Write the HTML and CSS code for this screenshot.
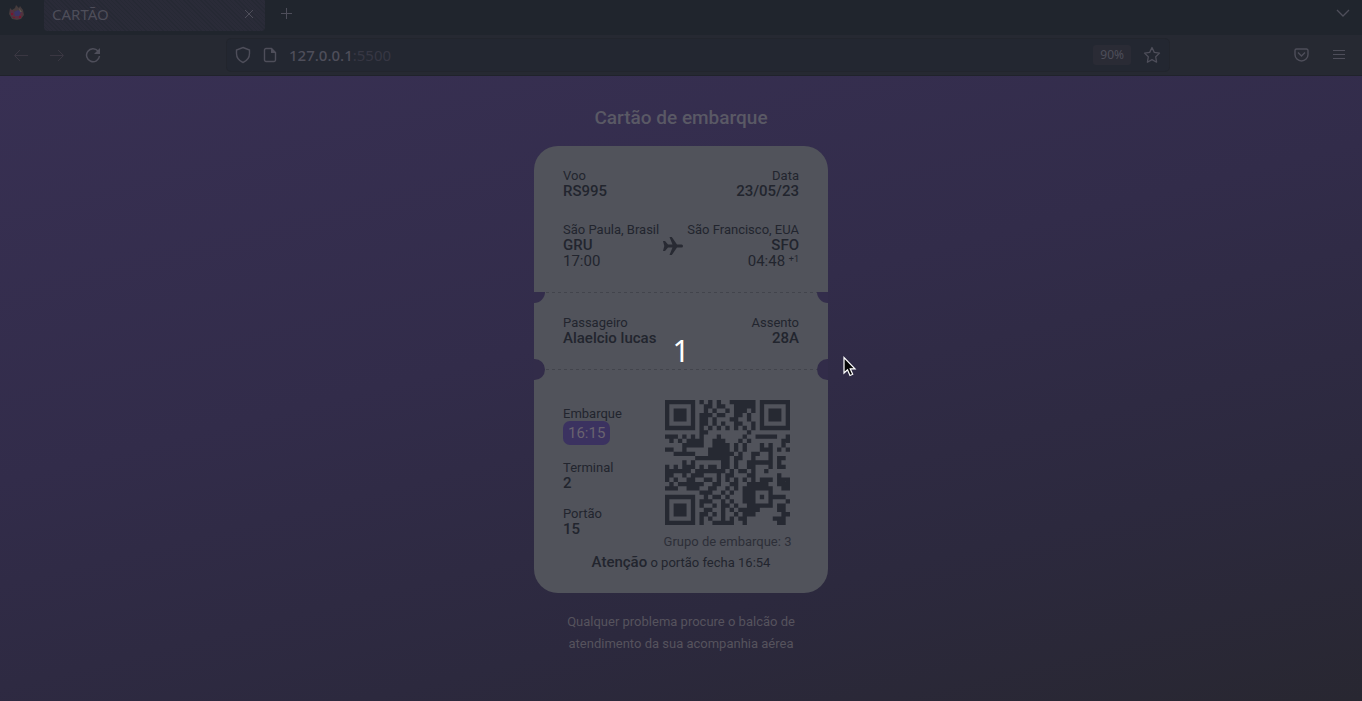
FILE: index.html
```html
<!DOCTYPE html>
<html lang="pt-BR">
<head>
<meta charset="utf-8">
<title>CARTÃO</title>
<link rel="stylesheet" href="styles.css">
</head>
<body>
<header class="browser">
  <div class="tabs">
    <svg class="logo" width="18" height="18" viewBox="0 0 18 18" aria-hidden="true"><path d="M2 4l2 2 3-2 1-3 3 3 1-2 3 4 1 5-3 4-4 1-5-1-3-5z" fill="#453b3c"/><path d="M2 6l3 0 3 3 6-1 1 2-3 5-5 0-4-3z" fill="#553040"/><path d="M6 8l4-2 3 2-2 4-4 0z" fill="#3b3465"/><path d="M3 9h2v2H3zM5 13h2v1H5zM11 12h2v2h-2z" fill="#77152f"/><path d="M11 4l3 4-2 0z" fill="#5f5650"/></svg>
    <div class="tab">
      <span>CARTÃO</span>
      <button class="icon" aria-label="Fechar aba"><svg width="10" height="10" viewBox="0 0 10 10"><path d="M1 1l8 8M9 1L1 9"/></svg></button>
    </div>
    <button class="icon new-tab" aria-label="Nova aba"><svg width="13" height="13" viewBox="0 0 13 13"><path d="M6.500 1v11M1 6.500h11"/></svg></button>
    <button class="icon list-tabs" aria-label="Listar abas"><svg width="14" height="14" viewBox="0 0 14 14"><path d="M1 3l6 6 6-6" stroke-width="1.300"/></svg></button>
  </div>
  <div class="toolbar">
    <nav class="nav">
      <button class="icon dim" aria-label="Voltar"><svg width="16" height="16" viewBox="0 0 16 16"><path d="M15 8.500H2M7 3L1.500 8.500 7 14"/></svg></button>
      <button class="icon dim" aria-label="Avançar"><svg width="16" height="16" viewBox="0 0 16 16"><path d="M1 8.500h13M9 3l5.500 5.500L9 14"/></svg></button>
      <button class="icon" aria-label="Recarregar"><svg width="16" height="16" viewBox="0 0 16 16"><path d="M13 4a6.500 6.500 0 1 0 1.500 5" stroke-width="1.500"/><path d="M15 1v6H9z" fill="currentColor" stroke="none"/></svg></button>
    </nav>
    <div class="address">
      <svg width="16" height="18" viewBox="0 0 16 18"><path d="M8 1.500L14.500 4v3.500c0 4-3 7.500-6.500 9-3.500-1.500-6.500-5-6.500-9V4z" stroke-width="1.400"/></svg>
      <svg width="14" height="16" viewBox="0 0 14 16"><path d="M3 1.500h5.500L12.500 5.500V13a1.500 1.500 0 0 1-1.500 1.500H3A1.500 1.500 0 0 1 1.500 13V3A1.500 1.500 0 0 1 3 1.500z" stroke-width="1.400"/><path d="M8 1v5h5z" fill="currentColor" stroke="none"/></svg>
      <span class="url"><b>127.0.0.1</b>:5500</span>
      <button class="zoom">90%</button>
      <button class="icon" aria-label="Favoritar"><svg width="18" height="18" viewBox="0 0 18 18"><path d="M9 1.500l2.300 4.900 5.200.7-3.800 3.700.9 5.400L9 13.600l-4.600 2.600.9-5.400L1.500 7.100l5.200-.7z" stroke-width="1.300" stroke-linejoin="round"/></svg></button>
    </div>
    <div class="tools">
      <button class="icon" aria-label="Pocket"><svg width="16" height="16" viewBox="0 0 16 16"><path d="M2.500 2h10A1.500 1.500 0 0 1 14 3.500V7.500A6.500 6.500 0 0 1 1 7.500V3.500A1.500 1.500 0 0 1 2.500 2zM4 5.500L7.500 9 11 5.500" stroke-width="1.400"/></svg></button>
      <button class="icon" aria-label="Menu"><svg width="14" height="14" viewBox="0 0 14 14"><path d="M1 2.500h12M1 6.500h12M1 10.500h12" stroke-width="1.200"/></svg></button>
    </div>
  </div>
</header>
<main class="page">
  <h1>Cartão de embarque</h1>
  <article class="card">
    <section class="flight">
      <div class="row">
        <dl><dt>Voo</dt><dd>RS995</dd></dl>
        <dl class="end"><dt>Data</dt><dd>23/05/23</dd></dl>
      </div>
      <div class="row">
        <dl><dt>São Paula, Brasil</dt><dd>GRU</dd><dd class="time">17:00</dd></dl>
        <svg class="plane" width="22" height="20" viewBox="0 0 22 20" aria-hidden="true"><path d="M1 5h2l3 3.500h4.500L7.500 1h2.300l5.200 7.500h4.500a1.500 1.500 0 0 1 0 3H15L9.800 19H7.500l3-7.500H6L3 15H1l1.300-5z" fill="#282a33"/></svg>
        <dl class="end"><dt>São Francisco, EUA</dt><dd>SFO</dd><dd class="time">04:48 <sup>+1</sup></dd></dl>
      </div>
    </section>
    <section class="passenger">
      <div class="row">
        <dl><dt>Passageiro</dt><dd>Alaelcio lucas</dd></dl>
        <dl class="end"><dt>Assento</dt><dd>28A</dd></dl>
      </div>
    </section>
    <section class="boarding">
      <div class="row">
        <div class="gate">
          <dl><dt>Embarque</dt><dd class="badge">16:15</dd></dl>
          <dl><dt>Terminal</dt><dd>2</dd></dl>
          <dl><dt>Portão</dt><dd>15</dd></dl>
        </div>
        <figure class="code">
          <svg id="qr" width="125" height="125" viewBox="0 0 29 29" role="img" aria-label="QR code"></svg>
          <figcaption>Grupo de embarque: 3</figcaption>
        </figure>
      </div>
      <p class="notice"><strong>Atenção</strong> o portão fecha 16:54</p>
    </section>
  </article>
  <p class="help">Qualquer problema procure o balcão de<br>atendimento da sua acompanhia aérea</p>
</main>
<div class="countdown">1</div>
<svg class="cursor" width="14" height="22" viewBox="0 0 14 22" aria-hidden="true"><path d="M1 1.500V17l3.500-3.300L7 19.500l2.700-1.200L7.200 12.800H12z" fill="#050505" stroke="#fff" stroke-width="1.200"/></svg>
<script src="qr.js"></script>
</body>
</html>
```
FILE: styles.css
```css
* { box-sizing: border-box; }
body {
  margin: 0;
  min-height: 100vh;
  display: flex;
  flex-direction: column;
  background: #272831;
  color: #22252e;
  font-family: Roboto, "Liberation Sans", sans-serif;
}
h1, p, dl, dd, figure { margin: 0; }
button { font: inherit; color: inherit; border: 0; padding: 0; background: none; }
.browser { font-family: "Noto Sans", "Open Sans", sans-serif; color: #4e4e5a; }
.browser svg { display: block; fill: none; stroke: currentColor; }
.browser .logo { stroke: none; margin: 4px 0 0 8px; }
.tabs { display: flex; height: 35px; background: #20252d; }
.tab {
  display: flex;
  align-items: center;
  justify-content: space-between;
  width: 221px;
  height: 31px;
  margin-left: 18px;
  padding: 0 11px 4px 8px;
  border-radius: 0 0 4px 4px;
  background: repeating-linear-gradient(45deg, #262934 0 1px, #2a2b38 1px 3px);
  font-size: 15px;
}
.new-tab { margin: 0 0 8px 15px; }
.list-tabs { margin: 0 12px 8px auto; }
.toolbar {
  display: flex;
  align-items: center;
  height: 41px;
  background: #262932;
  border-bottom: 1px solid #20232b;
}
.nav { display: flex; gap: 20px; width: 227px; padding-left: 13px; }
.dim { color: #3a3742; }
.address {
  flex: 1;
  display: flex;
  align-items: center;
  height: 32px;
  padding: 0 8px;
  border-radius: 4px;
  background: #232731;
  box-shadow: 0 0 0 1px #22252d;
  gap: 12px;
}
.url { flex: 1; font-size: 15px; color: #373744; }
.url b { font-weight: 500; color: #4e4e5a; }
.zoom { padding: 0 7px; border-radius: 3px; background: #2a2b35; font-size: 12px; line-height: 20px; }
.tools { display: flex; align-items: center; justify-content: flex-end; gap: 22px; width: 193px; padding-right: 16px; }

.page {
  flex: 1;
  display: flex;
  flex-direction: column;
  align-items: center;
  padding: 30px 16px 16px;
  background: linear-gradient(166deg, #383053 0%, #322c4a 42%, #2c293e 74%, #282731 100%);
}
h1 { font-size: 19px; line-height: 24px; font-weight: 500; color: #5a5965; }
.card {
  width: 294px;
  margin-top: 16px;
  border-radius: 24px;
  background: #51535b;
}
.flight { display: grid; gap: 23px; padding: 22px 29px 23px; }
.row { display: flex; justify-content: space-between; }
dt { font-size: 13px; line-height: 15px; }
dd { font-size: 15px; line-height: 16px; font-weight: 500; }
.time { font-weight: 400; }
sup { font-size: 9px; line-height: 1; vertical-align: 4px; }
.end { text-align: right; }
.plane { margin-top: 14px; }
.passenger, .boarding {
  position: relative;
  background: repeating-linear-gradient(90deg, #42444c 0 3px, transparent 3px 6px) 0 0 / 100% 1px no-repeat;
}
.passenger { padding: 23px 29px 23px; }
.boarding { padding: 31px 29px 22px; }
.passenger::before, .passenger::after, .boarding::before, .boarding::after {
  content: "";
  position: absolute;
  width: 11px;
  background: #332d4b;
}
.passenger::before, .passenger::after { top: 0; height: 11px; }
.boarding::before, .boarding::after { top: -10px; height: 21px; background: #322c49; }
.passenger::before { left: 0; border-radius: 0 0 11px 0; }
.passenger::after { right: 0; border-radius: 0 0 0 11px; }
.boarding::before { left: 0; border-radius: 0 11px 11px 0; }
.boarding::after { right: 0; border-radius: 11px 0 0 11px; }
.gate { display: grid; align-content: start; justify-items: start; gap: 15px; padding-top: 6px; }
.badge {
  width: fit-content;
  padding: 0 5px;
  border-radius: 7px;
  background: #3b3260;
  color: #69636f;
  line-height: 24px;
  font-weight: 400;
}
.code { width: 125px; margin-right: 9px; text-align: center; }
.code svg { display: block; fill: #262932; }
figcaption { margin: 9px -8px 0; font-size: 13px; line-height: 15px; color: #2d2f38; }
.notice { margin-top: 5px; font-size: 13px; line-height: 16px; text-align: center; }
.notice strong { font-size: 15px; font-weight: 500; }
.help { margin-top: 18px; font-size: 13px; line-height: 22px; text-align: center; color: #56535d; }

.countdown {
  position: absolute;
  inset: 0;
  display: grid;
  place-items: center;
  color: #fff;
  font: 30px/36px "Noto Sans", sans-serif;
  pointer-events: none;
}
.cursor { position: absolute; left: 843px; top: 356px; }
```
FILE: qr.js
```js
const rows = [
  "11111110101010011111101111111",
  "10000010011011001111101000001",
  "10111010010100101110101011101",
  "10111010111011001101001011101",
  "10111010110100011001001011101",
  "10000010110101001100101000001",
  "11111110101010101010101111111",
  "00000000110000000001000000000",
  "11101010100010000010011111001",
  "01010111100111000101000000011",
  "00001111100111101010001010010",
  "11001000001111101010001110101",
  "00111110001111110100110010000",
  "00000001111111101100100010110",
  "00001010000001101001111110100",
  "10101110101101101001100010110",
  "11111101111111010110100100000",
  "11001011100010110001100000100",
  "10100110011010101010101110111",
  "01011111100110011001111100111",
  "11100111001100101011111110011",
  "00000000111001010011100010000",
  "11111110010110100011101011110",
  "10000010111001010011100010001",
  "10111010100101101001111110110",
  "10111010011001010111110000110",
  "10111010110101001011100000011",
  "10000010101001010110000001110",
  "11111110100111110010000000110"
];
const path = document.createElementNS("http://www.w3.org/2000/svg", "path");
path.setAttribute("d", rows.map((row, y) =>
  [...row].map((cell, x) => cell === "1" ? `M${x} ${y}h1v1h-1z` : "").join("")
).join(""));
document.getElementById("qr").append(path);
```
